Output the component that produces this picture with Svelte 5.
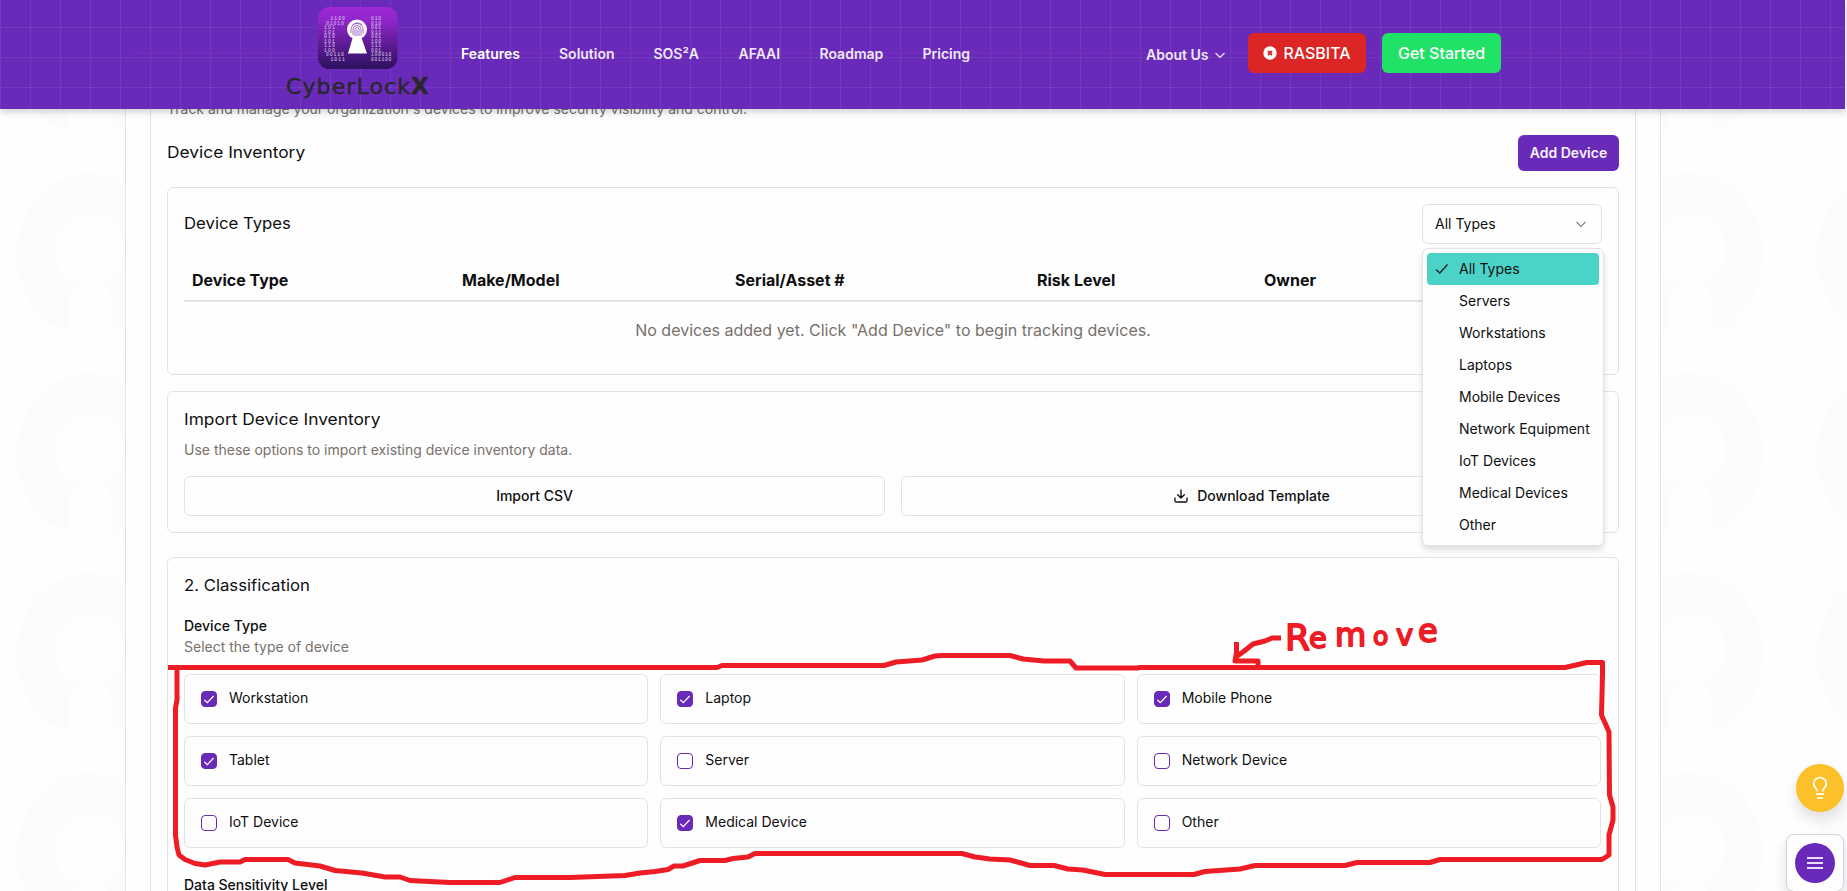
<script>
  const nav = [
    { label: 'Features', w: 58 },
    { label: 'Solution', w: 54.5 },
    { label: 'SOS²A', w: 45 },
    { label: 'AFAAI', w: 41 },
    { label: 'Roadmap', w: 63 },
    { label: 'Pricing', w: 47 }
  ];
  const columns = [
    { label: 'Device Type', w: 270 },
    { label: 'Make/Model', w: 273 },
    { label: 'Serial/Asset #', w: 302 },
    { label: 'Risk Level', w: 227 },
    { label: 'Owner', w: 150 }
  ];
  const options = ['All Types', 'Servers', 'Workstations', 'Laptops', 'Mobile Devices', 'Network Equipment', 'IoT Devices', 'Medical Devices', 'Other'];
  const devices = [
    { label: 'Workstation', on: true },
    { label: 'Laptop', on: true },
    { label: 'Mobile Phone', on: true },
    { label: 'Tablet', on: true },
    { label: 'Server', on: false },
    { label: 'Network Device', on: false },
    { label: 'IoT Device', on: false },
    { label: 'Medical Device', on: true },
    { label: 'Other', on: false }
  ];
  const leftBits = [
    [12.5, '1100'], [8, '01010'], [6, '101'], [6, '101'], [6, '010'],
    [6, '101'], [6, '110'], [6, '100'], [8, '00110'], [12.5, '1011']
  ];
  const rightBits = ['010', '010', '001', '011', '001', '100', '111', '001', '100010', '001100'];
</script>

<div class="page">
  <svg class="backdrop" width="1847" height="891" aria-hidden="true">
    <defs>
      <pattern id="keyhole" width="200" height="200" y="153" patternUnits="userSpaceOnUse">
        <path fill="#fcfcff" fill-rule="evenodd" d="M69 179.5C38 170 17 138 17 100C17 56 50 20 90 20S163 56 163 100C163 138 142 170 111 179.5V150C111 140 106 134 99 132A36 36 0 1 0 81 132C74 134 69 140 69 150Z" />
      </pattern>
      <pattern id="bits" width="360" height="180" x="10" y="30" patternUnits="userSpaceOnUse">
        <g fill="#fbfbfc" font-family="Liberation Mono" font-size="9">
          <text x="0" y="178">11100101</text>
          <text x="100" y="148">01001101</text>
          <text x="10" y="28">11001010</text>
          <text x="260" y="118">10101011</text>
        </g>
      </pattern>
    </defs>
    <rect width="1847" height="891" fill="url(#keyhole)" />
    <rect width="1847" height="891" fill="url(#bits)" />
  </svg>

  <header>
    <svg class="grid" width="1845" height="109" aria-hidden="true">
      <defs>
        <pattern id="mesh" width="60" height="60" x="30" y="27" patternUnits="userSpaceOnUse">
          <path d="M.5 0V60M30.5 0V60M0 .5H60M0 30.5H60" stroke="#7f5fc0" stroke-opacity=".3" />
          <rect x="-.5" y="-1" width="2" height="2" fill="#a47bd8" fill-opacity=".4" />
        </pattern>
      </defs>
      <rect width="1845" height="109" fill="url(#mesh)" />
      <rect x="130" y="52" width="1525" height="2" fill="#7a30bd" fill-opacity=".5" />
    </svg>
    <div class="brand">
      <svg width="80" height="62" viewBox="0 0 80 62" aria-hidden="true">
        <defs>
          <linearGradient id="badge" x1="0" y1="0" x2="0" y2="1">
            <stop offset="0" stop-color="#9f28d8" />
            <stop offset=".2" stop-color="#9127cb" />
            <stop offset="1" stop-color="#2c105e" />
          </linearGradient>
        </defs>
        <rect width="79.5" height="62" rx="11.5" fill="url(#badge)" />
        <g fill="#ddc9ee" font-family="Liberation Mono" font-size="4.8">
          {#each leftBits as [x, bits], i}
            <text {x} y={13 + i * 4.5} textLength={bits.length * 3.6}>{bits}</text>
          {/each}
          {#each rightBits as bits, i}
            <text x="53" y={13 + i * 4.5} textLength={bits.length * 3.4}>{bits}</text>
          {/each}
        </g>
        <circle cx="39" cy="22.5" r="10" fill="#fff" />
        <path d="M35.5 28H42.5L49 46.5H30Z" fill="#fff" />
        <g fill="none" stroke="#8b49b9" stroke-width=".8">
          <path d="M33 26v-3.500a6 6 0 0 1 12 0v4M35 28v-5.500a4 4 0 0 1 8 0v6M37 29v-6.500a2 2 0 0 1 4 0V29M39 22.500V29M34 18.500q5-5 10.500-.5" />
        </g>
      </svg>
      <div class="word">CyberLock<b>X</b></div>
    </div>
    <nav>
      {#each nav as item, i}
        <a class:active={i === 0} style="width:{item.w}px">{item.label}</a>
      {/each}
    </nav>
    <div class="actions">
      <span class="about">About Us
        <svg width="12" height="12" viewBox="0 0 12 12"><path d="M1.500 4L6 8.500L10.500 4" fill="none" stroke="currentColor" stroke-width="1.200" /></svg>
      </span>
      <button class="red">
        <svg width="14" height="14" viewBox="0 0 14 14"><circle cx="7" cy="7" r="6.700" fill="#fff" /><path d="M5 5L9 9M9 5L5 9" stroke="#dc2626" stroke-width="1.900" /></svg>
        RASBITA
      </button>
      <button class="green">Get Started</button>
    </div>
  </header>

  <main>
    <div class="inner">
      <p class="sub">Track and manage your organization's devices to improve security visibility and control.</p>
      <div class="row top">
        <h3 class="wide">Device Inventory</h3>
        <button class="add">Add Device</button>
      </div>

      <section class="card">
        <div class="row">
          <h3>Device Types</h3>
          <div class="select">
            All Types
            <svg width="12" height="12" viewBox="0 0 12 12"><path d="M1.500 4L6 8.500L10.500 4" fill="none" stroke="#868686" stroke-width="1.200" /></svg>
            <ul class="menu">
              {#each options as option, i}
                <li class:chosen={i === 0}>
                  {#if i === 0}
                    <svg width="14" height="14" viewBox="0 0 14 14"><path d="M1 7.500L4.800 11L12.500 2.500" fill="none" stroke="#17211f" stroke-width="1.300" /></svg>
                  {/if}
                  <span>{option}</span>
                </li>
              {/each}
            </ul>
          </div>
        </div>
        <div class="thead">
          {#each columns as col}
            <div style="width:{col.w}px">{col.label}</div>
          {/each}
        </div>
        <div class="empty">No devices added yet. Click "Add Device" to begin tracking devices.</div>
      </section>

      <section class="card second">
        <h3 class="wide">Import Device Inventory</h3>
        <p>Use these options to import existing device inventory data.</p>
        <div class="pair">
          <button>Import CSV</button>
          <button>
            <svg width="16" height="16" viewBox="0 0 24 24" fill="none" stroke="currentColor" stroke-width="2" stroke-linecap="round" stroke-linejoin="round"><path d="M21 15v4a2 2 0 0 1-2 2H5a2 2 0 0 1-2-2v-4M7 10l5 5 5-5M12 15V3" /></svg>
            Download Template
          </button>
        </div>
      </section>

      <section class="card third">
        <h3>2. Classification</h3>
        <div class="label">Device Type</div>
        <p>Select the type of device</p>
        <div class="checks">
          {#each devices as device}
            <div class="check">
              <span class="box" class:on={device.on}>
                {#if device.on}
                  <svg width="14" height="14" viewBox="0 0 14 14"><path d="M2.300 7.800L5.300 10.700L11.600 4" fill="none" stroke="#fff" stroke-width="1.200" /></svg>
                {/if}
              </span>
              <span>{device.label}</span>
            </div>
          {/each}
        </div>
        <div class="label">Data Sensitivity Level</div>
      </section>
    </div>
  </main>

  <div class="bulb">
    <svg width="24" height="24" viewBox="0 0 24 24" fill="none" stroke="#fff" stroke-width="1.700"><path d="M9.300 15.300C9 12 5.700 11.500 5.700 7.800A6.300 6.300 0 0 1 18.300 7.800C18.300 11.500 15 12 14.700 15.300M8 18.200H16M9 22H15" /></svg>
  </div>
  <div class="dock">
    <div><svg width="16" height="14" viewBox="0 0 16 14"><path d="M0 2H16M0 7H16M0 12H16" stroke="#e9def8" stroke-width="2" /></svg></div>
  </div>

  <svg class="marks" width="1847" height="891">
    <g fill="none" stroke="#ee1c24" stroke-width="5" stroke-linejoin="round">
      <path d="M168 667.500H717L722 665.500H884L896 662L922 660L935 656L942 655.500H1010L1023 659L1044 661H1070L1076 668H1138L1140 667.500H1565L1587 662.500H1602.500V675L1601.500 715L1609 732L1609.500 795L1613 807V820L1609 835V855L1602 859.500H1440L1430 862.500H1357L1345 865.500H1255L1240 869L1205 871.500L1194 874.500H1105L1083 870L1068 869L1054 865.500H1030L1010 860L990 859L975 857L962 853.500H755L748 857L733 858.500L725 860.500H700L683 866H674L668 869.500L655 871.500L640 873L625 875.500L570 877.500H515L500 882.500H450L410 880.500L400 877H385L362 873L335 870.500L320 866L295 863L288 859.500H245L240 862H220L205 865L195 863.500L185 859.500L179 855L177 847L175.500 835V708L177 700V670" />
      <path d="M1281 638H1272L1265 641L1253 644L1243 652L1236 657" />
      <path d="M1236.500 642V653L1235 661H1258V665" />
    </g>
    <text class="note" y="650 648 646 645 645 642" x="1285 1309 1335 1373 1396 1418"><tspan font-size="36">R</tspan><tspan font-size="29">e</tspan><tspan font-size="32">m</tspan><tspan font-size="25">o</tspan><tspan font-size="29">v</tspan><tspan font-size="32">e</tspan></text>
  </svg>
</div>

<style>
  :global(body) { background: #fefefe; overflow: hidden; }
  .page { position: relative; width: 1847px; height: 891px; overflow: hidden; font: 14px/20px Inter, sans-serif; color: #0f0f10; }
  .page, .page * { box-sizing: border-box; }
  p, h3, ul { margin: 0; padding: 0; }
  button { font: 500 14px/20px Inter, sans-serif; color: inherit; border: 0; }
  .backdrop, .marks { position: absolute; left: 0; top: 0; }
  .marks { z-index: 5; pointer-events: none; }
  .note { font-family: "DejaVu Sans", sans-serif; fill: #ee1c24; stroke: #ee1c24; stroke-width: 1.8px; stroke-linejoin: round; }
  header { position: relative; z-index: 3; width: 1845px; height: 109px; background: #6929b9; display: flex; box-shadow: 0 3px 7px rgba(0, 0, 0, .18); padding-left: 286px; }
  .grid { position: absolute; left: 0; top: 0; }
  .brand, nav, .actions { position: relative; }
  .brand { width: 174px; padding-top: 7px; }
  .brand svg { display: block; margin-left: 32px; }
  .word { font: 22px/24px "DejaVu Sans", sans-serif; color: #29272b; margin-top: 5px; white-space: nowrap; letter-spacing: 1.1px; -webkit-text-stroke: .4px #29272b; }
  .word b { letter-spacing: 0; font-size: 23px; }
  nav { display: flex; gap: 40px; padding: 44px 0 0 1px; width: 686px; height: 70px; }
  nav a { color: #efe8f8; font-weight: 600; white-space: nowrap; flex: none; }
  nav a.active { color: #fff; }
  .actions { display: flex; padding-top: 33px; align-items: flex-start; white-space: nowrap; }
  .about { display: flex; align-items: center; gap: 6px; color: #efe8f8; font-weight: 600; width: 102px; height: 20px; margin-top: 12px; }
  .actions button { height: 40px; border-radius: 6px; color: #fff; font-size: 16px; line-height: 24px; padding: 0; display: flex; align-items: center; justify-content: center; gap: 6px; }
  .red { width: 118px; background: #dc2626; margin-right: 16px; }
  .green { width: 119px; background: #1fe266; }
  main { position: relative; z-index: 1; margin: -10px 0 0 125px; width: 1536px; height: 802px; padding: 0 24px; background: #fefefe; border: solid #e3e3e5; border-width: 0 1px; }
  .inner { height: 802px; border: solid #e3e3e5; border-width: 0 1px; padding: 0 16px; }
  .sub, .card p { color: #78716c; }
  .row { display: flex; align-items: center; justify-content: space-between; }
  .top { margin: 16px 0; height: 36px; }
  h3 { font: 400 16px/24px Inter, sans-serif; white-space: nowrap; transform: translateY(-1px) scaleX(1.045); transform-origin: left; }
  h3.wide { transform: translateY(-1px) scaleX(1.085); }
  .add { width: 101px; height: 36px; border-radius: 6px; background: #6929b9; color: #f8f2ff; font-weight: 600; padding: 0; }
  .card { border: 1px solid #e3e3e5; border-radius: 6px; padding: 16px; height: 188px; }
  .select { position: relative; width: 180px; height: 40px; border: 1px solid #e3e3e5; border-radius: 6px; padding: 0 14px 0 12px; display: flex; align-items: center; justify-content: space-between; }
  .menu { position: absolute; z-index: 2; top: 43px; left: -1px; width: 182px; padding: 4px; list-style: none; background: #fefefe; border: 1px solid #e3e3e5; border-radius: 6px; box-shadow: 0 4px 6px rgba(0, 0, 0, .13); }
  .menu li { height: 32px; display: flex; align-items: center; padding-left: 32px; border-radius: 4px; white-space: nowrap; }
  .menu .chosen { background: #4bd3c8; padding-left: 8px; gap: 10px; }
  .thead { margin-top: 16px; height: 42px; padding-left: 8px; display: flex; border-bottom: 2px solid #e3e3e5; font: 700 16px/40px Inter, sans-serif; }
  .thead div { flex: none; }
  .empty { font-size: 16px; line-height: 24px; padding: 16px; text-align: center; color: #78716c; }
  .second { margin-top: 16px; height: 142px; }
  .second p { margin-top: 8px; }
  .pair { margin-top: 16px; display: grid; grid-template-columns: 1fr 1fr; gap: 16px; }
  .pair button { height: 40px; border: 1px solid #e3e3e5; border-radius: 6px; background: #fefefe; display: flex; align-items: center; justify-content: center; gap: 8px; }
  .third { margin-top: 24px; height: 360px; }
  .label { font-weight: 500; }
  .third h3 { margin-bottom: 18px; }
  .third p { margin-top: 1px; }
  .checks { margin: 17px 1px 27px 0; display: grid; grid-template-columns: repeat(3, 1fr); gap: 12px; }
  .check { height: 50px; border: 1px solid #e3e3e5; border-radius: 6px; padding: 0 16px; display: flex; align-items: center; gap: 12px; }
  .check > span:last-child { margin-top: -2px; }
  .box { width: 16px; height: 16px; border: 1px solid #6929b9; border-radius: 4px; display: flex; align-items: center; justify-content: center; }
  .box svg { flex: none; }
  .on { background: #6929b9; }
  .bulb { position: absolute; z-index: 4; left: 1796px; top: 764px; width: 48px; height: 48px; border-radius: 50%; background: #fbc02a; display: grid; place-items: center; box-shadow: 0 8px 14px rgba(0, 0, 0, .12); }
  .dock { position: absolute; z-index: 4; left: 1786px; top: 834px; width: 58px; height: 58px; border: 1px solid #d2d2dc; border-radius: 8px; background: #fefefe; display: grid; place-items: center; box-shadow: 0 8px 14px rgba(0, 0, 0, .12); }
  .dock div { width: 40px; height: 40px; border-radius: 50%; background: #6929b9; display: grid; place-items: center; }
</style>
